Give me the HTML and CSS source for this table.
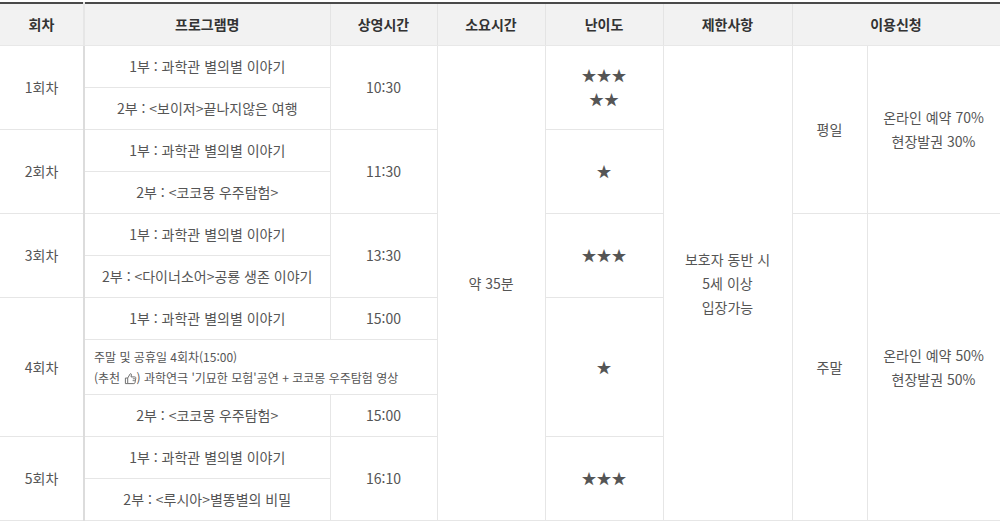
FILE: index.html
```html
<!DOCTYPE html>
<html lang="ko">
<head>
<meta charset="utf-8">
<link rel="stylesheet" href="styles.css">
</head>
<body>
<table class="tbl">
  <colgroup>
    <col class="c1"><col class="c2"><col class="c3"><col class="c4"><col class="c5"><col class="c6"><col class="c7"><col class="c8">
  </colgroup>
  <thead>
    <tr>
      <th class="first">회차</th>
      <th>프로그램명</th>
      <th>상영시간</th>
      <th>소요시간</th>
      <th>난이도</th>
      <th>제한사항</th>
      <th colspan="2">이용신청</th>
    </tr>
  </thead>
  <tbody>
    <tr>
      <td rowspan="2" class="first">1회차</td>
      <td>1부 : 과학관 별의별 이야기</td>
      <td rowspan="2">10:30</td>
      <td rowspan="11">약 35분</td>
      <td rowspan="2" class="star">★★★<br>★★</td>
      <td rowspan="11">보호자 동반 시<br>5세 이상<br>입장가능</td>
      <td rowspan="4">평일</td>
      <td rowspan="4">온라인 예약 70%<br>현장발권 30%</td>
    </tr>
    <tr><td>2부 : &lt;보이저&gt;끝나지않은 여행</td></tr>
    <tr>
      <td rowspan="2" class="first">2회차</td>
      <td>1부 : 과학관 별의별 이야기</td>
      <td rowspan="2">11:30</td>
      <td rowspan="2" class="star">★</td>
    </tr>
    <tr><td>2부 : &lt;코코몽 우주탐험&gt;</td></tr>
    <tr>
      <td rowspan="2" class="first">3회차</td>
      <td>1부 : 과학관 별의별 이야기</td>
      <td rowspan="2">13:30</td>
      <td rowspan="2" class="star">★★★</td>
      <td rowspan="7">주말</td>
      <td rowspan="7">온라인 예약 50%<br>현장발권 50%</td>
    </tr>
    <tr><td>2부 : &lt;다이너소어&gt;공룡 생존 이야기</td></tr>
    <tr>
      <td rowspan="3" class="first">4회차</td>
      <td>1부 : 과학관 별의별 이야기</td>
      <td>15:00</td>
      <td rowspan="3" class="star">★</td>
    </tr>
    <tr>
      <td colspan="2" class="note">주말 및 공휴일 4회차(15:00)<br>(추천 <svg class="thumb" viewBox="0 0 14 14" width="13" height="13"><path d="M1.5 6.5h2.5v6h-2.5z M4 6.5 L6.5 2.2 C6.8 1.6 7.9 1.7 8 2.6 L7.6 5.3 H11.6 C12.4 5.3 12.9 6 12.7 6.8 L11.8 11.6 C11.6 12.2 11.2 12.5 10.6 12.5 H4" fill="none" stroke="#666" stroke-width="1" stroke-linejoin="round"/><path d="M9.5 7.3h2.6 M9.3 9.3h2.4" fill="none" stroke="#666" stroke-width="0.9"/></svg>) 과학연극 '기묘한 모험'공연 + 코코몽 우주탐험 영상</td>
    </tr>
    <tr>
      <td>2부 : &lt;코코몽 우주탐험&gt;</td>
      <td>15:00</td>
    </tr>
    <tr>
      <td rowspan="2" class="first">5회차</td>
      <td>1부 : 과학관 별의별 이야기</td>
      <td rowspan="2">16:10</td>
      <td rowspan="2" class="star">★★★</td>
    </tr>
    <tr><td>2부 : &lt;루시아&gt;별똥별의 비밀</td></tr>
  </tbody>
</table>
</body>
</html>
```

FILE: styles.css
```css
html, body {
  margin: 0;
  padding: 0;
  background: #fff;
}
body {
  font-family: "Noto Sans CJK KR", "Noto Sans", sans-serif;
  color: #555;
  font-size: 14px;
}
.tbl {
  width: 1000px;
  margin-top: 2px;
  border-collapse: collapse;
  table-layout: fixed;
  border-top: 2px solid #4a4a4a;
  border-bottom: 1px solid #dedede;
}
.c1 { width: 84px; }
.c2 { width: 246px; }
.c3 { width: 107px; }
.c4 { width: 108px; }
.c5 { width: 118px; }
.c6 { width: 129px; }
.c7 { width: 75px; }
.c8 { width: 133px; }
.tbl th {
  background: #f2f2f2;
  color: #333;
  font-weight: bold;
  font-size: 14px;
  line-height: 24px;
  padding: 8px 4px 9px;
  border-left: 1px solid #e4e4e4;
  border-right: 1px solid #e4e4e4;
  border-bottom: 1px solid #e8e8e8;
  text-align: center;
}
.tbl th.first {
  border-left: none;
  border-right: 2px solid #e6e6e6;
}
.tbl td {
  text-align: center;
  vertical-align: middle;
  line-height: 24px;
  padding: 8px 4px 9px;
  border: 1px solid #e6e6e6;
}
.tbl td.first {
  border-left: none;
  border-right: 2px solid #dcdcdc;
}
.tbl td.star {
  font-size: 15px;
  color: #555;
}
.tbl td.note {
  text-align: left;
  font-size: 12px;
  line-height: 21px;
  padding: 6px 6px 6px 9px;
  color: #555;
}
.thumb {
  vertical-align: -2px;
}
```
